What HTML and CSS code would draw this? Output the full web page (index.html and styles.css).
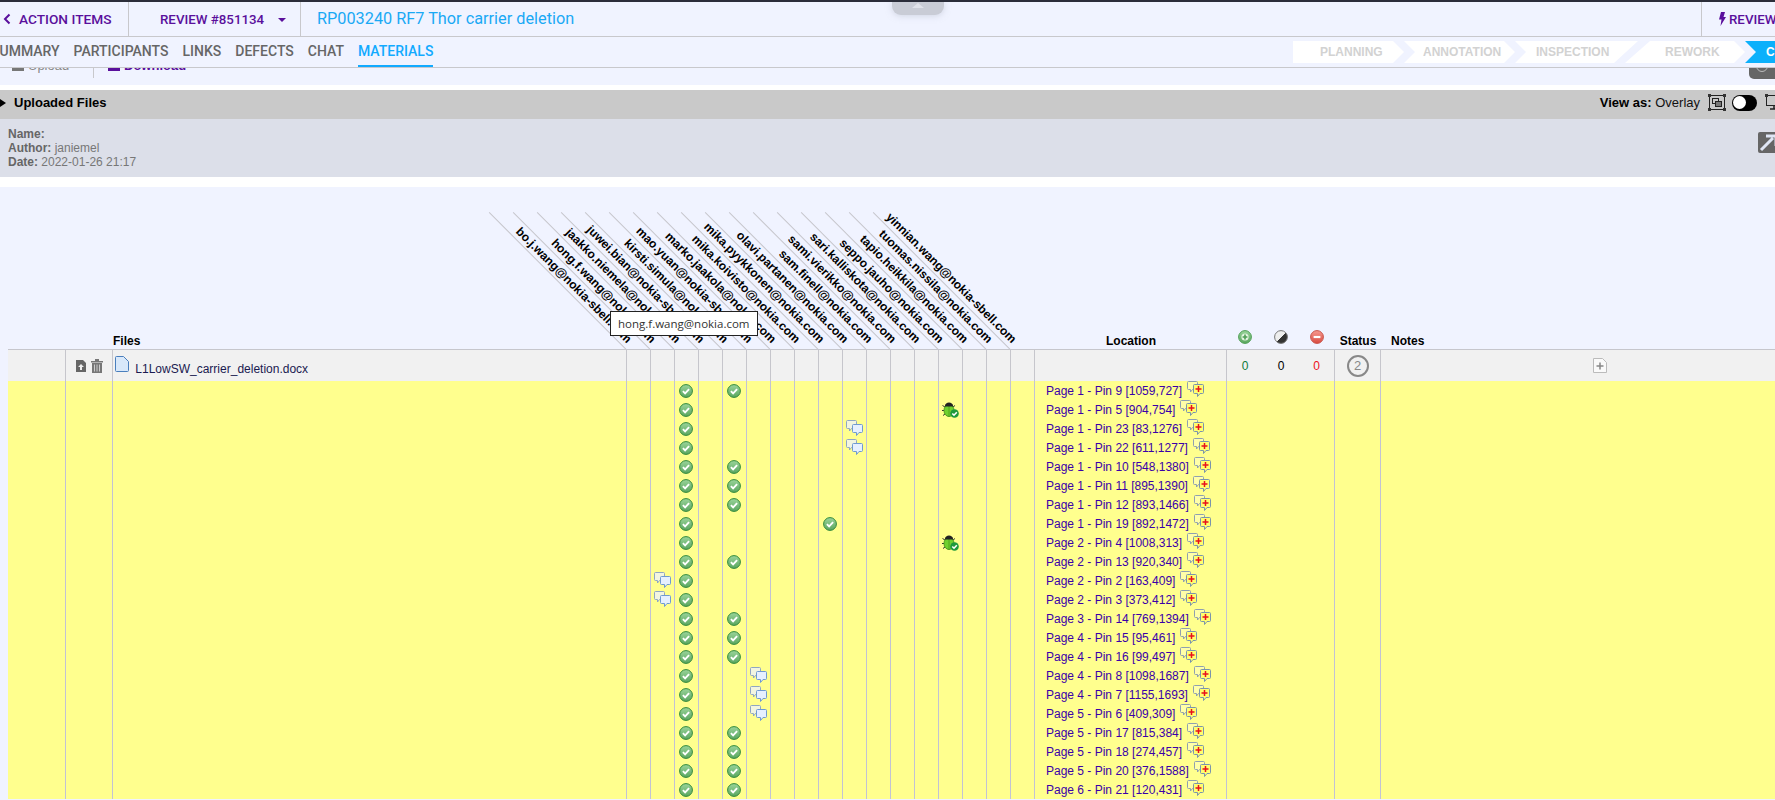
FILE: index.html
```html
<!DOCTYPE html>
<html lang="en">
<head>
  <meta charset="UTF-8">
  <title>RP003240 RF7 Thor carrier deletion</title>
  <link rel="stylesheet" href="styles.css">
</head>
<body>
  <svg class="sprites" width="0" height="0">
    <defs>
      <linearGradient id="g-ok" x1="0" y1="0" x2="0" y2="1"><stop offset="0" stop-color="#9ad49a"/><stop offset="1" stop-color="#5aa660"/></linearGradient>
      <linearGradient id="g-no" x1="0" y1="0" x2="0" y2="1"><stop offset="0" stop-color="#f79a90"/><stop offset="1" stop-color="#d84a40"/></linearGradient>
      <linearGradient id="g-half" x1="0" y1="0" x2="1" y2="1"><stop offset="0.5" stop-color="#eee"/><stop offset="0.5" stop-color="#333"/></linearGradient>
      <symbol id="i-ok" viewBox="0 0 14 14"><circle cx="7" cy="7" r="6.4" fill="url(#g-ok)" stroke="#338a3a"/><path d="M3.9 7.2l2.2 2.2 4-4.2" fill="none" stroke="#fff" stroke-width="1.9"/></symbol>
      <symbol id="i-plus" viewBox="0 0 14 14"><circle cx="7" cy="7" r="6.4" fill="url(#g-ok)" stroke="#4f9f55"/><circle cx="7" cy="7" r="3.6" fill="#e4f4e0"/><path d="M7 4.600v4.800M4.600 7h4.800" stroke="#4f9f55" stroke-width="1.600"/></symbol>
      <symbol id="i-half" viewBox="0 0 14 14"><circle cx="7" cy="7" r="6.4" fill="url(#g-half)" stroke="#777"/></symbol>
      <symbol id="i-minus" viewBox="0 0 14 14"><circle cx="7" cy="7" r="6.4" fill="url(#g-no)" stroke="#c9554c"/><path d="M3.600 7h6.800" stroke="#fff" stroke-width="2.200"/></symbol>
      <symbol id="i-chat" viewBox="0 0 17 16"><path d="M1.500.5h8a1 1 0 0 1 1 1v6a1 1 0 0 1-1 1H5.500L3.500 11V8.500h-2a1 1 0 0 1-1-1v-6a1 1 0 0 1 1-1z" fill="#f2f5e0" stroke="#8fa6c4"/><path d="M7.500 4.500h8a1 1 0 0 1 1 1v6a1 1 0 0 1-1 1h-2.500L10.500 15.500v-3h-3a1 1 0 0 1-1-1v-6a1 1 0 0 1 1-1z" fill="#e6f0ff" stroke="#6f9ad0"/></symbol>
      <symbol id="i-add" viewBox="0 0 17 16"><path d="M1.500.5h8a1 1 0 0 1 1 1v6a1 1 0 0 1-1 1H5.500L3.500 11V8.500h-2a1 1 0 0 1-1-1v-6a1 1 0 0 1 1-1z" fill="#ffffa8" stroke="#8fa0b0"/><path d="M7.500 3.500h8a1 1 0 0 1 1 1v7a1 1 0 0 1-1 1h-2.500L10.500 15.500v-3h-3a1 1 0 0 1-1-1v-7a1 1 0 0 1 1-1z" fill="#ffff6e" stroke="#7a94ad"/><path d="M11.500 5v6M8.500 8h6" stroke="#e8101c" stroke-width="1.500"/></symbol>
      <symbol id="i-bug" viewBox="0 0 17 16"><path d="M3 5L.5 3.500M2 8.500H0M3 12l-2 1.500M11 5l2-1.500" stroke="#333"/><ellipse cx="7" cy="8.500" rx="5" ry="6" fill="#6fd12e" stroke="#4c9a1c"/><path d="M7 2.500v12" stroke="#4c9a1c" stroke-width=".8"/><path d="M2.800 4.500C3 1.500 5 .5 7 .5s4 1 4.200 4z" fill="#222"/><circle cx="12.500" cy="11.500" r="4.300" fill="#1f9a3c"/><path d="M10.300 11.500l1.700 1.700 2.800-3" fill="none" stroke="#fff" stroke-width="1.600"/></symbol>
    </defs>
  </svg>

  <div class="drawer-handle"><span class="handle-arrow"></span></div>

  <header class="topbar">
    <a class="top-cell back-cell">
      <svg class="back-icon" viewBox="0 0 8 12"><path d="M6.500 1.500L2 6l4.500 4.500" fill="none" stroke="currentColor" stroke-width="2"/></svg>
      ACTION ITEMS
    </a>
    <a class="top-cell review-cell">REVIEW #851134<span class="caret"></span></a>
    <div class="title">RP003240 RF7 Thor carrier deletion</div>
    <a class="top-cell bolt-cell">
      <svg class="bolt-icon" viewBox="0 0 8 14"><path d="M3 0h4L5.500 5H8L2.500 14l1-6.500H1z" fill="currentColor"/></svg>
      REVIEW
    </a>
  </header>

  <div class="tabbar">
    <nav class="tabs">
      <a>SUMMARY</a>
      <a>PARTICIPANTS</a>
      <a>LINKS</a>
      <a>DEFECTS</a>
      <a>CHAT</a>
      <a class="active">MATERIALS</a>
    </nav>
    <div class="stages">
      <span class="stage planning">PLANNING</span>
      <span class="stage annotation">ANNOTATION</span>
      <span class="stage inspection">INSPECTION</span>
      <span class="stage rework">REWORK</span>
      <span class="stage current">COMPLETED</span>
    </div>
  </div>

  <div class="toolbar">
    <a class="tool upload"><span class="tool-icon"></span>Upload</a>
    <a class="tool download"><span class="tool-icon"></span>Download</a>
    <span class="eye-btn"><span class="eye"></span></span>
  </div>

  <section class="uploaded">
    <div class="uploaded-bar">
      <h2><span class="arrow-right"></span>Uploaded Files</h2>
      <div class="view-as">
        <span><b>View as:</b> Overlay</span>
        <svg class="view-icon" viewBox="0 0 18 17"><rect x="1.500" y="1.500" width="15" height="14" fill="none" stroke="#222"/><rect x="4.500" y="4.500" width="6" height="5" fill="none" stroke="#222"/><rect x="7.500" y="7.500" width="6" height="5" fill="#777" stroke="#222"/><path d="M0 0h3v3H0zM15 0h3v3h-3zM0 14h3v3H0zM15 14h3v3h-3z" fill="#333"/></svg>
        <span class="toggle"></span>
        <svg class="view-icon" viewBox="0 0 18 17"><rect x="1.500" y="1.500" width="15" height="10" fill="none" stroke="#222"/><path d="M9 11.500v3M5 15h8" stroke="#222" stroke-width="1.500"/><path d="M0 0h3v3H0zM15 0h3v3h-3z" fill="#333"/></svg>
      </div>
    </div>
    <div class="uploaded-meta">
      <p>
        <b>Name:</b><br>
        <b>Author:</b> janiemel<br>
        <b>Date:</b> 2022-01-26 21:17
      </p>
      <a class="expand-btn">
        <svg viewBox="0 0 24 21"><path d="M3 18L15 6M8 4h10v10" fill="none" stroke="#dfe6f5" stroke-width="3"/></svg>
      </a>
    </div>
  </section>

  <section class="matrix">
    <div class="tooltip">hong.f.wang@nokia.com</div>
    <table class="review-table">
      <colgroup>
        <col class="c-a"><col class="c-b"><col class="c-files">
        <col class="c-r"><col class="c-r"><col class="c-r"><col class="c-r"><col class="c-r"><col class="c-r"><col class="c-r"><col class="c-r"><col class="c-r"><col class="c-r"><col class="c-r"><col class="c-r"><col class="c-r"><col class="c-r"><col class="c-r"><col class="c-r"><col class="c-r">
        <col class="c-loc"><col class="c-n"><col class="c-n"><col class="c-n"><col class="c-status"><col class="c-notes">
      </colgroup>
      <thead>
        <tr>
          <th></th>
          <th></th>
          <th class="left">Files</th>
          <th class="rev"><span>bo.j.wang@nokia-sbell.com</span></th>
          <th class="rev"><span>hong.f.wang@nokia.com</span></th>
          <th class="rev"><span>jaakko.niemela@nokia.com</span></th>
          <th class="rev"><span>juwei.bian@nokia-sbell.com</span></th>
          <th class="rev"><span>kirsti.simula@nokia.com</span></th>
          <th class="rev"><span>mao.yuan@nokia-sbell.com</span></th>
          <th class="rev"><span>marko.jaakola@nokia.com</span></th>
          <th class="rev"><span>mika.koivisto@nokia.com</span></th>
          <th class="rev"><span>mika.pyykkonen@nokia.com</span></th>
          <th class="rev"><span>olavi.partanen@nokia.com</span></th>
          <th class="rev"><span>sam.finell@nokia.com</span></th>
          <th class="rev"><span>sami.vierikko@nokia.com</span></th>
          <th class="rev"><span>sari.kalliskota@nokia.com</span></th>
          <th class="rev"><span>seppo.jauho@nokia.com</span></th>
          <th class="rev"><span>tapio.heikkila@nokia.com</span></th>
          <th class="rev"><span>tuomas.nissila@nokia.com</span></th>
          <th class="rev"><span>yinnian.wang@nokia-sbell.com</span></th>
          <th>Location</th>
          <th class="sum"><svg class="ico"><use href="#i-plus"/></svg></th>
          <th class="sum"><svg class="ico"><use href="#i-half"/></svg></th>
          <th class="sum"><svg class="ico"><use href="#i-minus"/></svg></th>
          <th>Status</th>
          <th class="left notes-head">Notes</th>
        </tr>
      </thead>
      <tbody>
        <tr class="file-row">
          <td></td>
          <td class="file-tools">
            <svg class="tool-svg" viewBox="0 0 12 14"><path d="M1 1h7l3 3v9H1z" fill="#666"/><path d="M6 5l3 3H7v3H5V8H3z" fill="#eee"/></svg>
            <svg class="tool-svg" viewBox="0 0 12 14"><path d="M0 2h12v1.500H0zM4 0h4v2H4zM1 4h10v10H1z" fill="#777"/><path d="M3.500 5.500v7M6 5.500v7M8.500 5.500v7" stroke="#ccc"/></svg>
          </td>
          <td class="file-name">
            <svg class="doc-icon" viewBox="0 0 14 16"><path d="M1.500.5h7l5 5v9a1 1 0 0 1-1 1h-11a1 1 0 0 1-1-1v-13a1 1 0 0 1 1-1z" fill="#d8e8fa" stroke="#4a7fbd"/></svg>
            L1LowSW_carrier_deletion.docx
          </td>
          <td></td><td></td><td></td><td></td><td></td><td></td><td></td><td></td><td></td><td></td><td></td><td></td><td></td><td></td><td></td><td></td><td></td>
          <td></td>
          <td class="sum count-up">0</td>
          <td class="sum count-mid">0</td>
          <td class="sum count-down">0</td>
          <td><span class="status-ring">2</span></td>
          <td class="notes-cell"><svg class="note-add" viewBox="0 0 14 15"><path d="M.5.5h9l4 4v10H.5z" fill="#fafafa" stroke="#bbb"/><path d="M7 4.500v7M3.500 8h7" stroke="#888" stroke-width="1.500"/></svg></td>
        </tr>
        <tr><td></td><td></td><td></td><td></td><td></td><td><svg class="ico"><use href="#i-ok"/></svg></td><td></td><td><svg class="ico"><use href="#i-ok"/></svg></td><td></td><td></td><td></td><td></td><td></td><td></td><td></td><td></td><td></td><td></td><td></td><td></td><td class="loc"><a>Page 1 - Pin 9 [1059,727]<svg class="add"><use href="#i-add"/></svg></a></td><td colspan="3"></td><td></td><td></td></tr>
        <tr><td></td><td></td><td></td><td></td><td></td><td><svg class="ico"><use href="#i-ok"/></svg></td><td></td><td></td><td></td><td></td><td></td><td></td><td></td><td></td><td></td><td></td><td><svg class="ico bug"><use href="#i-bug"/></svg></td><td></td><td></td><td></td><td class="loc"><a>Page 1 - Pin 5 [904,754]<svg class="add"><use href="#i-add"/></svg></a></td><td colspan="3"></td><td></td><td></td></tr>
        <tr><td></td><td></td><td></td><td></td><td></td><td><svg class="ico"><use href="#i-ok"/></svg></td><td></td><td></td><td></td><td></td><td></td><td></td><td><svg class="ico chat"><use href="#i-chat"/></svg></td><td></td><td></td><td></td><td></td><td></td><td></td><td></td><td class="loc"><a>Page 1 - Pin 23 [83,1276]<svg class="add"><use href="#i-add"/></svg></a></td><td colspan="3"></td><td></td><td></td></tr>
        <tr><td></td><td></td><td></td><td></td><td></td><td><svg class="ico"><use href="#i-ok"/></svg></td><td></td><td></td><td></td><td></td><td></td><td></td><td><svg class="ico chat"><use href="#i-chat"/></svg></td><td></td><td></td><td></td><td></td><td></td><td></td><td></td><td class="loc"><a>Page 1 - Pin 22 [611,1277]<svg class="add"><use href="#i-add"/></svg></a></td><td colspan="3"></td><td></td><td></td></tr>
        <tr><td></td><td></td><td></td><td></td><td></td><td><svg class="ico"><use href="#i-ok"/></svg></td><td></td><td><svg class="ico"><use href="#i-ok"/></svg></td><td></td><td></td><td></td><td></td><td></td><td></td><td></td><td></td><td></td><td></td><td></td><td></td><td class="loc"><a>Page 1 - Pin 10 [548,1380]<svg class="add"><use href="#i-add"/></svg></a></td><td colspan="3"></td><td></td><td></td></tr>
        <tr><td></td><td></td><td></td><td></td><td></td><td><svg class="ico"><use href="#i-ok"/></svg></td><td></td><td><svg class="ico"><use href="#i-ok"/></svg></td><td></td><td></td><td></td><td></td><td></td><td></td><td></td><td></td><td></td><td></td><td></td><td></td><td class="loc"><a>Page 1 - Pin 11 [895,1390]<svg class="add"><use href="#i-add"/></svg></a></td><td colspan="3"></td><td></td><td></td></tr>
        <tr><td></td><td></td><td></td><td></td><td></td><td><svg class="ico"><use href="#i-ok"/></svg></td><td></td><td><svg class="ico"><use href="#i-ok"/></svg></td><td></td><td></td><td></td><td></td><td></td><td></td><td></td><td></td><td></td><td></td><td></td><td></td><td class="loc"><a>Page 1 - Pin 12 [893,1466]<svg class="add"><use href="#i-add"/></svg></a></td><td colspan="3"></td><td></td><td></td></tr>
        <tr><td></td><td></td><td></td><td></td><td></td><td><svg class="ico"><use href="#i-ok"/></svg></td><td></td><td></td><td></td><td></td><td></td><td><svg class="ico"><use href="#i-ok"/></svg></td><td></td><td></td><td></td><td></td><td></td><td></td><td></td><td></td><td class="loc"><a>Page 1 - Pin 19 [892,1472]<svg class="add"><use href="#i-add"/></svg></a></td><td colspan="3"></td><td></td><td></td></tr>
        <tr><td></td><td></td><td></td><td></td><td></td><td><svg class="ico"><use href="#i-ok"/></svg></td><td></td><td></td><td></td><td></td><td></td><td></td><td></td><td></td><td></td><td></td><td><svg class="ico bug"><use href="#i-bug"/></svg></td><td></td><td></td><td></td><td class="loc"><a>Page 2 - Pin 4 [1008,313]<svg class="add"><use href="#i-add"/></svg></a></td><td colspan="3"></td><td></td><td></td></tr>
        <tr><td></td><td></td><td></td><td></td><td></td><td><svg class="ico"><use href="#i-ok"/></svg></td><td></td><td><svg class="ico"><use href="#i-ok"/></svg></td><td></td><td></td><td></td><td></td><td></td><td></td><td></td><td></td><td></td><td></td><td></td><td></td><td class="loc"><a>Page 2 - Pin 13 [920,340]<svg class="add"><use href="#i-add"/></svg></a></td><td colspan="3"></td><td></td><td></td></tr>
        <tr><td></td><td></td><td></td><td></td><td><svg class="ico chat"><use href="#i-chat"/></svg></td><td><svg class="ico"><use href="#i-ok"/></svg></td><td></td><td></td><td></td><td></td><td></td><td></td><td></td><td></td><td></td><td></td><td></td><td></td><td></td><td></td><td class="loc"><a>Page 2 - Pin 2 [163,409]<svg class="add"><use href="#i-add"/></svg></a></td><td colspan="3"></td><td></td><td></td></tr>
        <tr><td></td><td></td><td></td><td></td><td><svg class="ico chat"><use href="#i-chat"/></svg></td><td><svg class="ico"><use href="#i-ok"/></svg></td><td></td><td></td><td></td><td></td><td></td><td></td><td></td><td></td><td></td><td></td><td></td><td></td><td></td><td></td><td class="loc"><a>Page 2 - Pin 3 [373,412]<svg class="add"><use href="#i-add"/></svg></a></td><td colspan="3"></td><td></td><td></td></tr>
        <tr><td></td><td></td><td></td><td></td><td></td><td><svg class="ico"><use href="#i-ok"/></svg></td><td></td><td><svg class="ico"><use href="#i-ok"/></svg></td><td></td><td></td><td></td><td></td><td></td><td></td><td></td><td></td><td></td><td></td><td></td><td></td><td class="loc"><a>Page 3 - Pin 14 [769,1394]<svg class="add"><use href="#i-add"/></svg></a></td><td colspan="3"></td><td></td><td></td></tr>
        <tr><td></td><td></td><td></td><td></td><td></td><td><svg class="ico"><use href="#i-ok"/></svg></td><td></td><td><svg class="ico"><use href="#i-ok"/></svg></td><td></td><td></td><td></td><td></td><td></td><td></td><td></td><td></td><td></td><td></td><td></td><td></td><td class="loc"><a>Page 4 - Pin 15 [95,461]<svg class="add"><use href="#i-add"/></svg></a></td><td colspan="3"></td><td></td><td></td></tr>
        <tr><td></td><td></td><td></td><td></td><td></td><td><svg class="ico"><use href="#i-ok"/></svg></td><td></td><td><svg class="ico"><use href="#i-ok"/></svg></td><td></td><td></td><td></td><td></td><td></td><td></td><td></td><td></td><td></td><td></td><td></td><td></td><td class="loc"><a>Page 4 - Pin 16 [99,497]<svg class="add"><use href="#i-add"/></svg></a></td><td colspan="3"></td><td></td><td></td></tr>
        <tr><td></td><td></td><td></td><td></td><td></td><td><svg class="ico"><use href="#i-ok"/></svg></td><td></td><td></td><td><svg class="ico chat"><use href="#i-chat"/></svg></td><td></td><td></td><td></td><td></td><td></td><td></td><td></td><td></td><td></td><td></td><td></td><td class="loc"><a>Page 4 - Pin 8 [1098,1687]<svg class="add"><use href="#i-add"/></svg></a></td><td colspan="3"></td><td></td><td></td></tr>
        <tr><td></td><td></td><td></td><td></td><td></td><td><svg class="ico"><use href="#i-ok"/></svg></td><td></td><td></td><td><svg class="ico chat"><use href="#i-chat"/></svg></td><td></td><td></td><td></td><td></td><td></td><td></td><td></td><td></td><td></td><td></td><td></td><td class="loc"><a>Page 4 - Pin 7 [1155,1693]<svg class="add"><use href="#i-add"/></svg></a></td><td colspan="3"></td><td></td><td></td></tr>
        <tr><td></td><td></td><td></td><td></td><td></td><td><svg class="ico"><use href="#i-ok"/></svg></td><td></td><td></td><td><svg class="ico chat"><use href="#i-chat"/></svg></td><td></td><td></td><td></td><td></td><td></td><td></td><td></td><td></td><td></td><td></td><td></td><td class="loc"><a>Page 5 - Pin 6 [409,309]<svg class="add"><use href="#i-add"/></svg></a></td><td colspan="3"></td><td></td><td></td></tr>
        <tr><td></td><td></td><td></td><td></td><td></td><td><svg class="ico"><use href="#i-ok"/></svg></td><td></td><td><svg class="ico"><use href="#i-ok"/></svg></td><td></td><td></td><td></td><td></td><td></td><td></td><td></td><td></td><td></td><td></td><td></td><td></td><td class="loc"><a>Page 5 - Pin 17 [815,384]<svg class="add"><use href="#i-add"/></svg></a></td><td colspan="3"></td><td></td><td></td></tr>
        <tr><td></td><td></td><td></td><td></td><td></td><td><svg class="ico"><use href="#i-ok"/></svg></td><td></td><td><svg class="ico"><use href="#i-ok"/></svg></td><td></td><td></td><td></td><td></td><td></td><td></td><td></td><td></td><td></td><td></td><td></td><td></td><td class="loc"><a>Page 5 - Pin 18 [274,457]<svg class="add"><use href="#i-add"/></svg></a></td><td colspan="3"></td><td></td><td></td></tr>
        <tr><td></td><td></td><td></td><td></td><td></td><td><svg class="ico"><use href="#i-ok"/></svg></td><td></td><td><svg class="ico"><use href="#i-ok"/></svg></td><td></td><td></td><td></td><td></td><td></td><td></td><td></td><td></td><td></td><td></td><td></td><td></td><td class="loc"><a>Page 5 - Pin 20 [376,1588]<svg class="add"><use href="#i-add"/></svg></a></td><td colspan="3"></td><td></td><td></td></tr>
        <tr><td></td><td></td><td></td><td></td><td></td><td><svg class="ico"><use href="#i-ok"/></svg></td><td></td><td><svg class="ico"><use href="#i-ok"/></svg></td><td></td><td></td><td></td><td></td><td></td><td></td><td></td><td></td><td></td><td></td><td></td><td></td><td class="loc"><a>Page 6 - Pin 21 [120,431]<svg class="add"><use href="#i-add"/></svg></a></td><td colspan="3"></td><td></td><td></td></tr>
      </tbody>
    </table>
  </section>
</body>
</html>
```

FILE: styles.css
```css
html, body {
  height: 800px;
  overflow: hidden;
}

body {
  margin: 0;
  background: #f0f3ff;
  border-top: 2px solid #2b2d3a;
  box-sizing: border-box;
  font-family: "Liberation Sans", Arial, sans-serif;
  font-size: 12px;
  color: #222;
  position: relative;
}

.sprites {
  display: block;
  height: 0;
}

.drawer-handle {
  position: absolute;
  top: 0;
  left: 892px;
  width: 52px;
  height: 13px;
  background: #c9ccd6;
  border-radius: 0 0 9px 9px;
  display: flex;
  justify-content: center;
  box-shadow: 0 1px 6px rgba(180, 185, 200, 0.5);
}

.handle-arrow {
  margin-top: 1px;
  width: 0;
  height: 0;
  border-left: 6px solid transparent;
  border-right: 6px solid transparent;
  border-bottom: 5px solid #e0e2ea;
}

/* top bar */
.topbar {
  display: flex;
  height: 34px;
  border-bottom: 1px solid #c8c8cc;
  font-family: Roboto, sans-serif;
  font-weight: 500;
  font-size: 13.3px;
  color: #5a0f9c;
}

.top-cell {
  display: flex;
  align-items: center;
  flex: none;
  box-sizing: border-box;
  white-space: nowrap;
}

.back-cell {
  width: 129px;
  padding-left: 3px;
  gap: 8px;
  font-size: 13.7px;
  border-right: 1px solid #c8c8cc;
}

.back-icon {
  width: 8px;
  height: 12px;
}

.review-cell {
  width: 172px;
  padding-left: 31px;
  border-right: 1px solid #c8c8cc;
}

.caret {
  margin-left: 14px;
  margin-top: 2px;
  border-left: 4px solid transparent;
  border-right: 4px solid transparent;
  border-top: 4px solid #5a0f9c;
}

.title {
  flex: 1;
  padding-left: 16px;
  line-height: 34px;
  font-size: 16.3px;
  font-weight: 400;
  color: #1aa9f5;
}

.bolt-cell {
  width: 74px;
  padding-left: 16px;
  gap: 3px;
  border-left: 1px solid #c8c8cc;
  overflow: hidden;
}

.bolt-icon {
  width: 8px;
  height: 14px;
  flex: none;
}

/* tabs and stage arrows */
.tabbar {
  display: flex;
  justify-content: space-between;
  height: 30px;
  border-bottom: 1px solid #c8c8cc;
  overflow: hidden;
}

.tabs {
  display: flex;
  gap: 14px;
  margin-left: -9px;
  font-family: Roboto, sans-serif;
  font-weight: 500;
  font-size: 14px;
  color: #666;
}

.tabs a {
  line-height: 29px;
  height: 30px;
  box-sizing: border-box;
}

.tabs .active {
  color: #12aaff;
  border-bottom: 2px solid #12aaff;
}

.stages {
  display: flex;
  margin-top: 4px;
  width: 482px;
  flex: none;
  font-weight: bold;
  font-size: 12px;
  color: #d2d2d2;
}

.stage {
  flex: none;
  box-sizing: border-box;
  height: 22px;
  line-height: 22px;
  background: #fff;
  white-space: nowrap;
}

.planning {
  width: 111px;
  padding-left: 27px;
  clip-path: polygon(0 0, calc(100% - 11px) 0, 100% 50%, calc(100% - 11px) 100%, 0 100%);
}

.annotation {
  width: 111px;
  padding-left: 19px;
  clip-path: polygon(0 0, calc(100% - 11px) 0, 100% 50%, calc(100% - 11px) 100%, 0 100%, 11px 50%);
}

.inspection {
  width: 123px;
  padding-left: 21px;
  clip-path: polygon(0 0, 100% 0, calc(100% - 24px) 100%, 0 100%, 11px 50%);
}

.rework {
  width: 120px;
  margin-left: -13px;
  padding-left: 40px;
  clip-path: polygon(25px 0, calc(100% - 11px) 0, 100% 50%, calc(100% - 11px) 100%, 0 100%);
}

.current {
  width: 60px;
  padding-left: 21px;
  background: #0cb0fb;
  color: #fff;
  clip-path: polygon(0 0, 100% 0, 100% 100%, 0 100%, 11px 50%);
}

/* toolbar is scrolled under the tabs, only its lower edge shows */
.toolbar {
  display: flex;
  height: 17px;
  overflow: hidden;
  font-size: 13px;
}

.tool {
  display: flex;
  gap: 4px;
  align-items: flex-start;
  height: 20px;
  margin-top: -10px;
  line-height: 15px;
  white-space: nowrap;
}

.tool-icon {
  width: 12px;
  height: 13px;
}

.upload {
  margin-left: 12px;
  width: 81px;
  color: #888;
  border-right: 1px solid #c8c8cc;
}

.upload .tool-icon {
  background: #777;
}

.download {
  margin-left: 14px;
  color: #5a0f9c;
  font-weight: bold;
}

.download .tool-icon {
  background: #5a0f9c;
}

.eye-btn {
  margin-left: auto;
  margin-right: -10px;
  width: 36px;
  height: 11px;
  background: #666;
  border-radius: 0 0 0 5px;
  overflow: hidden;
}

.eye {
  display: block;
  margin: -8px 0 0 7px;
  width: 10px;
  height: 10px;
  border: 1px solid #bbb;
  border-radius: 50%;
}

/* uploaded files panel */
.uploaded {
  padding: 5px 0 10px;
  background: #fff;
}

.uploaded-bar {
  display: flex;
  justify-content: space-between;
  align-items: center;
  box-sizing: border-box;
  height: 29px;
  padding-bottom: 4px;
  background: #c9c9c9;
  overflow: hidden;
}

.uploaded-bar h2 {
  display: flex;
  align-items: center;
  gap: 8px;
  margin: 0;
  font-size: 13px;
  color: #000;
}

.arrow-right {
  border-top: 4px solid transparent;
  border-bottom: 4px solid transparent;
  border-left: 6px solid #000;
}

.view-as {
  display: flex;
  align-items: center;
  margin-right: -8px;
  font-size: 13px;
  color: #111;
  white-space: nowrap;
}

.view-as b {
  color: #000;
}

.view-icon {
  width: 18px;
  height: 17px;
  margin-left: 8px;
  flex: none;
}

.toggle {
  margin-left: 6px;
  box-sizing: border-box;
  width: 25px;
  height: 16px;
  border-radius: 8px;
  background: #000;
  position: relative;
}

.toggle::before {
  content: "";
  position: absolute;
  left: 1px;
  top: 1.500px;
  width: 13px;
  height: 13px;
  border-radius: 50%;
  background: #fff;
}

.uploaded-meta {
  display: flex;
  justify-content: space-between;
  align-items: flex-start;
  height: 58px;
  background: #dcdfe9;
}

.uploaded-meta p {
  margin: 8px 0 0 8px;
  line-height: 14px;
  font-size: 12px;
  color: #777;
}

.uploaded-meta b {
  color: #666;
}

.expand-btn {
  margin: 13px -7px 0 0;
  width: 24px;
  height: 21px;
  background: #666;
  border-radius: 2px;
}

.expand-btn svg {
  display: block;
  width: 24px;
  height: 21px;
}

/* reviewer matrix */
.matrix {
  position: relative;
}

.tooltip {
  position: absolute;
  left: 610px;
  top: 124px;
  z-index: 5;
  box-sizing: border-box;
  width: 148px;
  height: 25px;
  padding-left: 7px;
  line-height: 23px;
  background: #fff;
  border: 1px solid #222;
  font-family: "Open Sans", sans-serif;
  font-size: 11.5px;
  color: #333;
  white-space: nowrap;
}

.review-table {
  margin-left: 8px;
  width: 1842px;
  table-layout: fixed;
  border-collapse: separate;
  border-spacing: 0;
}

.c-a { width: 58px; }
.c-b { width: 47px; }
.c-files { width: 514px; }
.c-r { width: 24px; }
.c-loc { width: 192px; }
.c-n { width: 36px; }
.c-status { width: 46px; }
.c-notes { width: 469px; }

.review-table th {
  height: 161px;
  padding: 0 0 1px;
  vertical-align: bottom;
  border-bottom: 1px solid #c6c6cc;
  font-size: 12px;
  line-height: 14px;
  color: #000;
}

.review-table th.left {
  text-align: left;
}

.notes-head {
  padding-left: 10px !important;
}

.review-table th .ico {
  margin: 0 auto 4px;
}

.rev {
  position: relative;
}

.rev::before {
  content: "";
  position: absolute;
  right: calc(100% + 1px);
  bottom: -1px;
  width: 194px;
  height: 1px;
  background: #c6c6cc;
  transform-origin: 100% 100%;
  transform: rotate(45deg);
}

.rev span {
  position: absolute;
  right: calc(100% + 2px);
  bottom: 3px;
  line-height: 14px;
  white-space: nowrap;
  transform-origin: 100% 100%;
  transform: rotate(45deg);
}

.review-table td {
  height: 19px;
  padding: 0;
  background: #ffff8e;
  border-right: 1px solid #c2c2d4;
  text-align: center;
  vertical-align: middle;
}

.review-table td:last-child {
  border-right: 0;
}

.ico {
  display: block;
  width: 14px;
  height: 14px;
  margin-left: 4px;
}

.ico.chat,
.ico.bug {
  width: 17px;
  height: 16px;
  margin-left: 3px;
}

.ico.chat {
  margin-bottom: 2px;
}

.loc a {
  display: flex;
  align-items: center;
  height: 19px;
  padding-left: 11px;
  font-size: 12px;
  color: #3a00aa;
  white-space: nowrap;
}

.add {
  width: 17px;
  height: 16px;
  margin: -3px 0 0 5px;
  flex: none;
}

.file-row td {
  height: 31px;
  background: #f1f1f1;
  border-right-color: #c6c6cc;
}

.file-row td.sum {
  border-right: 0;
  font-size: 12px;
}

.file-row td.count-down {
  border-right: 1px solid #c6c6cc;
}

.count-up { color: #0f7a3c; }
.count-mid { color: #000; }
.count-down { color: #ee1122; }

.file-tools {
  white-space: nowrap;
}

.tool-svg {
  width: 12px;
  height: 14px;
  vertical-align: middle;
}

.review-table .file-name {
  text-align: left;
  padding-left: 2px;
  color: #1a1a50;
  font-size: 12px;
  white-space: nowrap;
}

.doc-icon {
  width: 14px;
  height: 16px;
  margin-right: 3px;
  vertical-align: 1px;
}

.status-ring {
  display: inline-block;
  box-sizing: border-box;
  width: 22px;
  height: 22px;
  line-height: 18px;
  border: 2px solid #888;
  border-radius: 50%;
  font-size: 13px;
  color: #888;
}

.notes-cell {
  text-align: left !important;
  padding-left: 212px !important;
}

.note-add {
  display: block;
  width: 14px;
  height: 15px;
}
```
